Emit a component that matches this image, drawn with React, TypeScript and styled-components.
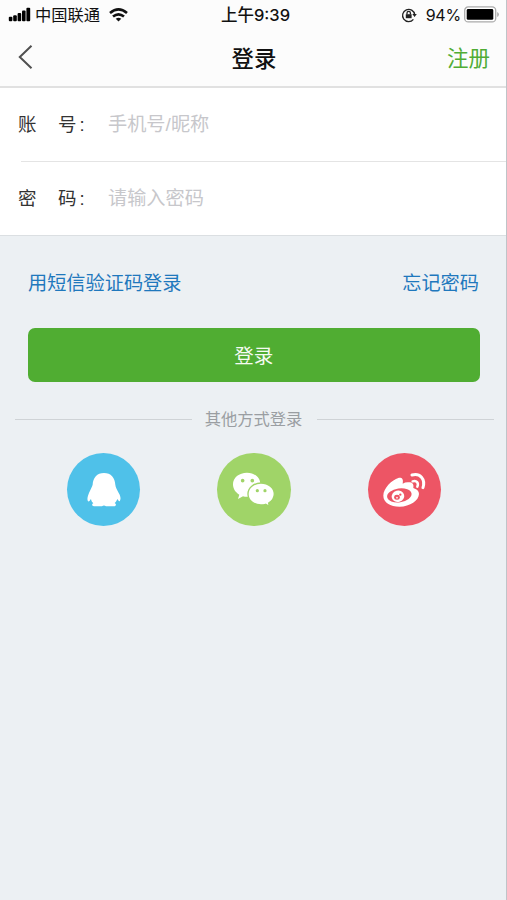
import React from "react";
import styled, { createGlobalStyle } from "styled-components";

const GlobalStyle = createGlobalStyle`
  *, *::before, *::after { box-sizing: border-box; }
  body {
    margin: 0;
    background: #ecf0f3;
    font-family: "Liberation Sans", "Noto Sans CJK SC", sans-serif;
  }
  button, input { font: inherit; }
`;

const Screen = styled.main`
  display: flex;
  flex-direction: column;
  width: 507px;
  height: 900px;
  overflow: hidden;
  background: #ecf0f3;
  border-right: 1px solid #bfc4c8;
`;

const Header = styled.header`
  height: 88px;
  background: #fcfcfc;
  border-bottom: 2px solid #e1e1e1;
`;

const StatusBar = styled.div`
  display: grid;
  grid-template-columns: 1fr auto 1fr;
  align-items: center;
  height: 29px;
  padding: 0 6px 0 8px;
  color: #111;
`;

const StatusGroup = styled.div<{ $end?: boolean }>`
  display: flex;
  align-items: center;
  justify-content: ${(p) => (p.$end ? "flex-end" : "flex-start")};
`;

const Carrier = styled.span`
  margin: -1px 9px 1px 4px;
  font: 400 16.3px/28px "Noto Sans CJK SC", sans-serif;
`;

const Clock = styled.span`
  font: 500 16.5px/28px Inter, "Noto Sans CJK SC", sans-serif;
  margin-left: 3px;
`;

const Percent = styled.span`
  margin: 0 3px 0 9px;
  font: 400 16px/28px Inter, sans-serif;
  letter-spacing: -0.2px;
`;

const NavBar = styled.nav`
  display: grid;
  grid-template-columns: 1fr auto 1fr;
  align-items: center;
  height: 55px;
  padding: 0 16px 0 18px;
`;

const BackButton = styled.button`
  display: flex;
  justify-self: start;
  padding: 0;
  border: 0;
  background: none;
`;

const Title = styled.h1`
  margin: 0;
  color: #111;
  font: 500 22.4px/32px "Noto Sans CJK SC", sans-serif;
`;

const RegisterLink = styled.a`
  justify-self: end;
  color: #50ac35;
  font: 400 21.5px/32px "Noto Sans CJK SC", sans-serif;
`;

const Fields = styled.section`
  height: 148px;
  padding-left: 18px;
  background: #fff;
  border-bottom: 1px solid #dbdfe2;
`;

const Field = styled.label`
  display: flex;
  align-items: center;
  height: 73px;
  padding-top: 1px;
  font: 400 19.2px/28px "Liberation Sans", "Noto Sans CJK SC", sans-serif;
`;

const FieldDivider = styled.div`
  height: 1px;
  margin-left: 3px;
  background: #e4e4e4;
`;

const FieldName = styled.span`
  display: flex;
  width: 90px;
  color: #333;
  font-size: 18.5px;
`;

const FieldChar = styled.span`
  width: 40px;
`;

const FieldColon = styled.span`
  margin-left: 3px;
`;

const FieldInput = styled.input`
  flex: 1;
  min-width: 0;
  padding: 0;
  border: 0;
  outline: 0;
  background: transparent;
  &::placeholder { color: #c7c7cb; opacity: 1; }
`;

const Links = styled.div`
  display: flex;
  justify-content: space-between;
  margin: 32px 27px 0 28px;
  height: 28px;
`;

const TextLink = styled.a`
  color: #1f78bd;
  font: 400 19.2px/28px "Noto Sans CJK SC", sans-serif;
`;

const LoginButton = styled.button`
  flex: none;
  height: 54px;
  margin: 32px 26px 0 27.5px;
  padding: 0;
  border: 0;
  border-radius: 7px;
  background: #50ad32;
  color: #f5fbf2;
  font: 400 19.5px/54px "Noto Sans CJK SC", sans-serif;
`;

const Divider = styled.div`
  display: flex;
  align-items: center;
  height: 24px;
  margin: 25px 12px 0 15px;
  color: #9a9ea2;
  font: 400 16.3px/24px "Noto Sans CJK SC", sans-serif;
  &::before, &::after {
    content: "";
    flex: 1;
    height: 1px;
    background: #cfd3d6;
  }
`;

const DividerLabel = styled.span`
  margin: -1px 15px 1px 13px;
`;

const Providers = styled.div`
  display: flex;
  justify-content: space-between;
  margin: 21.7px 64.7px 0 66.7px;
`;

const ProviderButton = styled.button<{ $color: string }>`
  width: 73.3px;
  height: 73.3px;
  padding: 0;
  border: 0;
  border-radius: 50%;
  background: ${(p) => p.$color};
`;

const Glyph = styled.svg`
  display: block;
`;

function SignalIcon() {
  return (
    <Glyph width="23" height="16" viewBox="0 0 23 16">
      <rect x="0.8" y="9.8" width="3.6" height="4.4" rx="1" />
      <rect x="5.2" y="8.2" width="3.6" height="6" rx="1" />
      <rect x="9.6" y="6" width="3.6" height="8.2" rx="1" />
      <rect x="14" y="3.4" width="3.6" height="10.8" rx="1" />
      <rect x="18.4" y="0.8" width="3.8" height="13.4" rx="1" />
    </Glyph>
  );
}

function WifiIcon() {
  return (
    <Glyph width="19" height="14" viewBox="0 0 19 14" fill="none" stroke="#111" strokeWidth="2.6">
      <path d="M1 5.1Q9.5-2.2 18 5.1" />
      <path d="M4 8.6Q9.5 4 15 8.6" />
      <path d="M9.5 13.5 6.7 10.7Q9.5 8.6 12.3 10.7Z" fill="#111" stroke="none" />
    </Glyph>
  );
}

function RotationLockIcon() {
  return (
    <Glyph width="16" height="16" viewBox="0 0 16 16" fill="none" stroke="#222" strokeWidth="1.3">
      <path d="M12.4 12.3A6.1 6.1 0 1 1 13.7 7.6" />
      <path d="m11.3 7 4.5 0-2.2 3Z" fill="#222" stroke="none" />
      <rect x="4.8" y="7.2" width="5.8" height="4" fill="#222" stroke="none" />
      <path d="M6 7.3V6a1.7 1.7 0 0 1 3.4 0v1.3" />
    </Glyph>
  );
}

function BatteryIcon() {
  return (
    <Glyph width="36" height="17" viewBox="0 0 36 17">
      <rect x="0.7" y="0.9" width="31" height="15" rx="3.5" fill="#fff" stroke="#aaa" strokeWidth="1.3" />
      <rect x="2.7" y="3" width="26.6" height="10.8" rx="1.4" />
      <path d="M33.2 6v5q1.7-.7 1.7-2.5T33.2 6Z" fill="#aaa" />
    </Glyph>
  );
}

function BackIcon() {
  return (
    <Glyph width="15" height="26" viewBox="0 0 15 26" fill="none" stroke="#505050" strokeWidth="2">
      <path d="M13.5 1.8 1.8 13 13.5 24.2" />
    </Glyph>
  );
}

function QQIcon() {
  return (
    <Glyph width="73.3" height="73.3" viewBox="20 23 220 220" fill="#fff">
      <path d="M131 83C110 83 98 97 97 118C95 124 91 132 86 143C81 154 80 164 83 168C86 170 89 165 92 161C93 167 95 170 99 174C94 176 94 182 101 183H125Q131 178 137 183H161C168 182 169 176 163 173C167 170 169 166 171 161C174 165 177 170 179 166C183 161 180 150 174 141C170 132 166 126 165 118C164 97 152 83 131 83Z" />
    </Glyph>
  );
}

function WeChatIcon() {
  return (
    <Glyph width="73.3" height="73.3" viewBox="24 23 220 220" fill="#fff">
      <path d="M114 82C90 82 72 97 72 117C72 130 79 141 91 148L87 161L102 153Q113 156 126 153L154 116C154 97 137 82 114 82Z" />
      <path
        d="M156 113C134 113 117 128 117 146C117 165 134 179 156 179Q164 179 170 177L181 183L179 173C189 167 196 157 196 146C196 128 178 113 156 113Z"
        stroke="#a0d468"
        strokeWidth="4"
      />
      <g fill="#a0d468">
        <circle cx="101" cy="106" r="5.5" />
        <circle cx="130" cy="106" r="5.5" />
        <circle cx="145" cy="136" r="4.8" />
        <circle cx="168" cy="136" r="4.8" />
      </g>
    </Glyph>
  );
}

function WeiboIcon() {
  return (
    <Glyph width="73.3" height="73.3" viewBox="25 23 220 220" fill="#fff">
      <path d="M116 98C98 103 71 128 71 151C71 171 92 184 120 184C151 184 178 165 178 146C178 136 170 131 161 128C163 117 159 111 147 111Q138 110 129 115C132 102 127 96 116 98Z" />
      <ellipse cx="119" cy="150" rx="37" ry="21" transform="rotate(-8 119 150)" fill="#ed5565" />
      <ellipse cx="115" cy="153" rx="19" ry="17" transform="rotate(-15 115 153)" />
      <ellipse cx="112" cy="156" rx="8.5" ry="7.5" fill="#ed5565" />
      <circle cx="122" cy="148" r="3.5" fill="#ed5565" />
      <circle cx="112" cy="157" r="2.5" />
      <g fill="none" stroke="#fff" strokeLinecap="round">
        <path d="M157 89C181 82 198 101 190 127" strokeWidth="9" />
        <path d="M159 108C171 104 178 113 173 124" strokeWidth="7.5" />
      </g>
    </Glyph>
  );
}

const fields = [
  { chars: ["账", "号"], placeholder: "手机号/昵称", type: "text" },
  { chars: ["密", "码"], placeholder: "请输入密码", type: "password" },
];

const providers = [
  { name: "QQ", color: "#4fc1e9", Icon: QQIcon },
  { name: "微信", color: "#a0d468", Icon: WeChatIcon },
  { name: "微博", color: "#ed5565", Icon: WeiboIcon },
];

export default function App() {
  return (
    <>
      <GlobalStyle />
      <Screen>
        <Header>
          <StatusBar>
            <StatusGroup>
              <SignalIcon />
              <Carrier>中国联通</Carrier>
              <WifiIcon />
            </StatusGroup>
            <Clock>上午9:39</Clock>
            <StatusGroup $end>
              <RotationLockIcon />
              <Percent>94%</Percent>
              <BatteryIcon />
            </StatusGroup>
          </StatusBar>
          <NavBar>
            <BackButton aria-label="返回">
              <BackIcon />
            </BackButton>
            <Title>登录</Title>
            <RegisterLink>注册</RegisterLink>
          </NavBar>
        </Header>
        <Fields>
          {fields.map((field, index) => (
            <React.Fragment key={field.type}>
              {index > 0 && <FieldDivider />}
              <Field>
                <FieldName>
                  <FieldChar>{field.chars[0]}</FieldChar>
                  <span>{field.chars[1]}</span>
                  <FieldColon>:</FieldColon>
                </FieldName>
                <FieldInput type={field.type} placeholder={field.placeholder} />
              </Field>
            </React.Fragment>
          ))}
        </Fields>
        <Links>
          <TextLink>用短信验证码登录</TextLink>
          <TextLink>忘记密码</TextLink>
        </Links>
        <LoginButton>登录</LoginButton>
        <Divider>
          <DividerLabel>其他方式登录</DividerLabel>
        </Divider>
        <Providers>
          {providers.map(({ name, color, Icon }) => (
            <ProviderButton key={name} $color={color} aria-label={name}>
              <Icon />
            </ProviderButton>
          ))}
        </Providers>
      </Screen>
    </>
  );
}
